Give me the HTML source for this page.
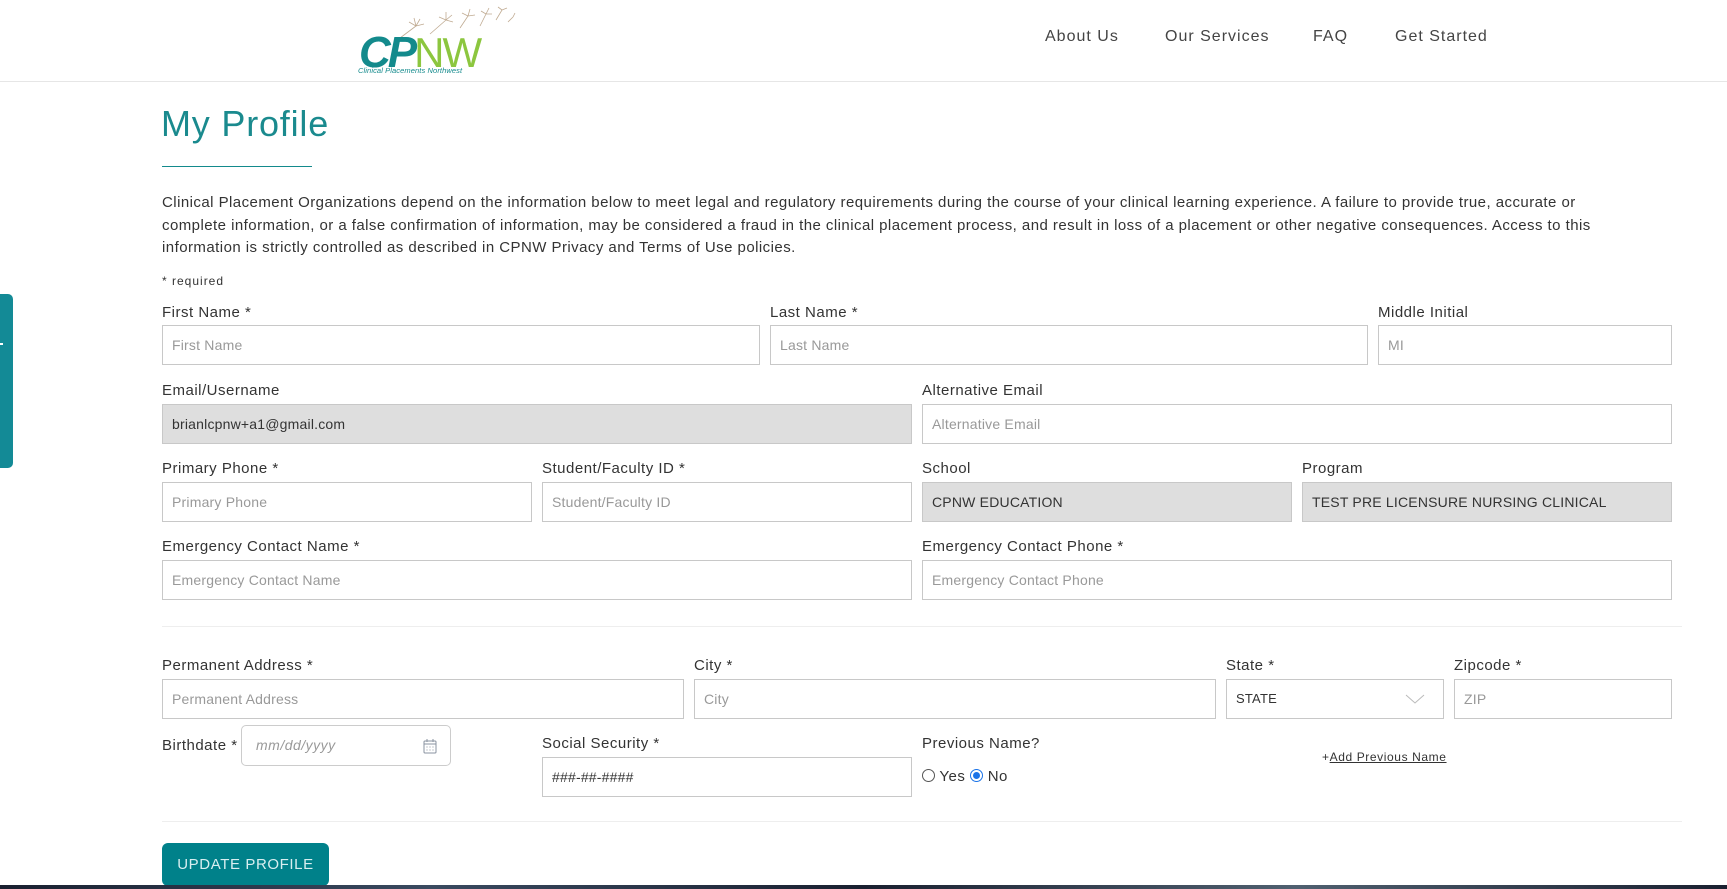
<!DOCTYPE html>
<html><head><meta charset="utf-8">
<style>
*{box-sizing:border-box;margin:0;padding:0}
body{width:1727px;height:889px;position:relative;background:#fff;font-family:"Liberation Sans",sans-serif;color:#333;overflow:hidden;letter-spacing:0.5px}
.a{position:absolute}
.hdr{left:0;top:0;width:1727px;height:82px;border-bottom:1px solid #e6e6e6;background:#fff}
.nav{top:30px;font-size:16px;color:#444;letter-spacing:1px}
.lbl{font-size:15px;color:#333;white-space:nowrap}
.inp{border:1px solid #c8c8c8;background:#fff;height:40px;font-size:14px;color:#999;padding-left:9px;line-height:38px;letter-spacing:0.2px;white-space:nowrap;overflow:hidden}
.ro{background:#dedede;color:#333}
.hr{height:1px;background:#eee;left:162px;width:1520px}
</style></head><body>
<div class="a hdr"></div>
<div class="a" style="left:358px;top:4px;width:160px;height:72px">
<svg width="160" height="40" style="position:absolute;left:0;top:0" viewBox="0 0 160 40" fill="none" stroke="#c0ab92" stroke-width="0.8">
<path d="M42 34 L58 22 M58 22 l-7 -4 M58 22 l-2 -8 M58 22 l4 -7 M58 22 l8 -2"/>
<path d="M72 30 L88 16 M88 16 l-7 -3 M88 16 l0 -8 M88 16 l6 -5 M88 16 l7 2"/>
<path d="M102 24 L110 12 M110 12 l-6 -3 M110 12 l2 -7 M110 12 l7 -1"/>
<path d="M122 22 L128 10 M128 10 l-5 -3 M128 10 l3 -6 M128 10 l6 0"/>
<path d="M138 16 L144 6 M144 6 l-4 -3 M144 6 l5 -2"/>
<path d="M150 18 l5 -5 M155 13 l2 -4"/>
</svg>
<div class="a" style="left:1px;top:24px;font-size:44px;font-weight:bold;font-style:italic;color:#138a8c;letter-spacing:-3px">CP<span style="color:#8cc63f;font-weight:normal;font-style:normal;letter-spacing:-2px;font-size:42px">NW</span></div>
<div class="a" style="left:0;top:62px;font-size:7.5px;font-style:italic;color:#138a8c;letter-spacing:0.1px">Clinical Placements Northwest</div>
</div>
<div class="a nav" style="left:1045px;top:28px">About Us</div>
<div class="a nav" style="left:1165px;top:28px">Our Services</div>
<div class="a nav" style="left:1313px;top:28px">FAQ</div>
<div class="a nav" style="left:1395px;top:28px">Get Started</div>

<div class="a" style="left:0;top:294px;width:13px;height:174px;background:#138a96;border-radius:0 5px 5px 0"></div>
<div class="a" style="left:0;top:343px;width:3px;height:2px;background:#fff"></div>

<div class="a" style="left:161px;top:103px;font-size:36px;color:#1a8a8e;letter-spacing:0.8px">My Profile</div>
<div class="a" style="left:162px;top:166px;width:150px;height:1px;background:#138a8c"></div>

<div class="a" style="left:162px;top:192px;width:1470px;font-size:15px;line-height:22.5px;color:#333;letter-spacing:0.45px">Clinical Placement Organizations depend on the information below to meet legal and regulatory requirements during the course of your clinical learning experience. A failure to provide true, accurate or complete information, or a false confirmation of information, may be considered a fraud in the clinical placement process, and result in loss of a placement or other negative consequences. Access to this information is strictly controlled as described in CPNW Privacy and Terms of Use policies.</div>
<div class="a" style="left:162px;top:274px;font-size:12px;letter-spacing:1px">* required</div>

<div class="a lbl" style="left:162px;top:304px">First Name *</div>
<div class="a lbl" style="left:770px;top:304px">Last Name *</div>
<div class="a lbl" style="left:1378px;top:304px">Middle Initial</div>
<div class="a inp" style="left:162px;top:325px;width:598px">First Name</div>
<div class="a inp" style="left:770px;top:325px;width:598px">Last Name</div>
<div class="a inp" style="left:1378px;top:325px;width:294px">MI</div>

<div class="a lbl" style="left:162px;top:382px">Email/Username</div>
<div class="a lbl" style="left:922px;top:382px">Alternative Email</div>
<div class="a inp ro" style="left:162px;top:404px;width:750px">brianlcpnw+a1@gmail.com</div>
<div class="a inp" style="left:922px;top:404px;width:750px">Alternative Email</div>

<div class="a lbl" style="left:162px;top:460px">Primary Phone *</div>
<div class="a lbl" style="left:542px;top:460px">Student/Faculty ID *</div>
<div class="a lbl" style="left:922px;top:460px">School</div>
<div class="a lbl" style="left:1302px;top:460px">Program</div>
<div class="a inp" style="left:162px;top:482px;width:370px">Primary Phone</div>
<div class="a inp" style="left:542px;top:482px;width:370px">Student/Faculty ID</div>
<div class="a inp ro" style="left:922px;top:482px;width:370px">CPNW EDUCATION</div>
<div class="a inp ro" style="left:1302px;top:482px;width:370px">TEST PRE LICENSURE NURSING CLINICAL</div>

<div class="a lbl" style="left:162px;top:538px">Emergency Contact Name *</div>
<div class="a lbl" style="left:922px;top:538px">Emergency Contact Phone *</div>
<div class="a inp" style="left:162px;top:560px;width:750px">Emergency Contact Name</div>
<div class="a inp" style="left:922px;top:560px;width:750px">Emergency Contact Phone</div>

<div class="a hr" style="top:626px"></div>

<div class="a lbl" style="left:162px;top:657px">Permanent Address *</div>
<div class="a lbl" style="left:694px;top:657px">City *</div>
<div class="a lbl" style="left:1226px;top:657px">State *</div>
<div class="a lbl" style="left:1454px;top:657px">Zipcode *</div>
<div class="a inp" style="left:162px;top:679px;width:522px">Permanent Address</div>
<div class="a inp" style="left:694px;top:679px;width:522px">City</div>
<div class="a inp" style="left:1226px;top:679px;width:218px;color:#333;font-size:13px">STATE
<svg class="a" style="left:178px;top:14px" width="20" height="10" viewBox="0 0 20 10"><path d="M1 1 L10 9 L19 1" fill="none" stroke="#bbb" stroke-width="1"/></svg></div>
<div class="a inp" style="left:1454px;top:679px;width:218px">ZIP</div>

<div class="a lbl" style="left:162px;top:737px">Birthdate *</div>
<div class="a" style="left:241px;top:725px;width:210px;height:41px;border:1px solid #ccc;border-radius:5px;font-size:14px;font-style:italic;color:#999;padding:11px 0 0 14px">mm/dd/yyyy
<svg class="a" style="left:181px;top:13px" width="14" height="15" viewBox="0 0 14 15" fill="none" stroke="#8a93a0" stroke-width="1"><rect x="1" y="2" width="12" height="12" rx="1"/><path d="M1 5h12M4 0v3M10 0v3M3.5 8h1M6.5 8h1M9.5 8h1M3.5 11h1M6.5 11h1M9.5 11h1"/></svg></div>

<div class="a lbl" style="left:542px;top:735px">Social Security *</div>
<div class="a inp" style="left:542px;top:757px;width:370px;color:#333">###-##-####</div>

<div class="a lbl" style="left:922px;top:735px">Previous Name?</div>
<div class="a" style="left:922px;top:768px;font-size:15px;color:#333;white-space:nowrap">
<span style="display:inline-block;width:13px;height:13px;border:1px solid #555;border-radius:50%;vertical-align:-1px"></span> Yes
<span style="display:inline-block;width:13px;height:13px;border:1px solid #1a73e8;border-radius:50%;vertical-align:-1px;position:relative"><span style="position:absolute;left:2px;top:2px;width:7px;height:7px;border-radius:50%;background:#1a73e8"></span></span> No</div>

<div class="a" style="left:1322px;top:750px;font-size:12px;color:#333;letter-spacing:0.6px">+<span style="text-decoration:underline">Add Previous Name</span></div>

<div class="a hr" style="top:821px"></div>
<div class="a" style="left:162px;top:843px;width:167px;height:43px;background:#00818a;border-radius:6px;color:#d8eef0;font-size:15px;letter-spacing:0.6px;text-align:center;line-height:43px">UPDATE PROFILE</div>
<div class="a" style="left:0;top:885px;width:1727px;height:4px;background:linear-gradient(90deg,#1a2030,#3a4a60,#1a2030,#506070,#1a2030)"></div>
</body></html>
